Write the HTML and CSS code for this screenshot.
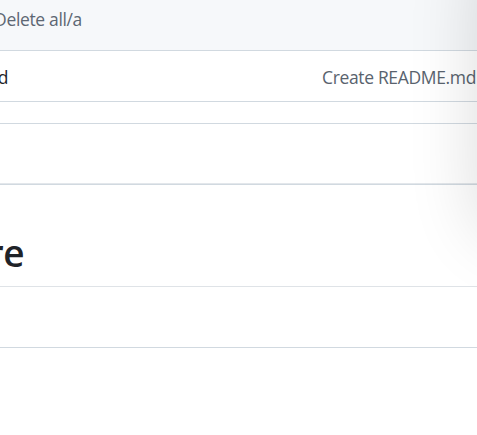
FILE: index.html
```html
<!DOCTYPE html>
<html lang="en">
<head>
<meta charset="utf-8">
<title>Repository</title>
<link rel="stylesheet" href="styles.css">
</head>
<body>
<div class="page">
  <div class="files">
    <div class="files-head">
      <div class="cut cut-head"><span class="muted">Delete all/a</span></div>
    </div>
    <div class="file-row">
      <div class="cut cut-name"><span class="name">d</span></div>
      <div class="commit">Create README.md</div>
    </div>
    <div class="file-gap"></div>
  </div>
  <div class="readme">
    <div class="readme-bar"></div>
    <div class="readme-body">
      <div class="h1">
        <div class="cut cut-h1"><span>re</span></div>
      </div>
      <div class="para"></div>
    </div>
  </div>
</div>
<div class="drawer-shadow"></div>
</body>
</html>
```
FILE: styles.css
```css
html, body {
  margin: 0;
  padding: 0;
  background: #ffffff;
  overflow: hidden;
}
body {
  font-family: "Open Sans", "Noto Sans", sans-serif;
  font-size: 17.5px;
  letter-spacing: -0.35px;
  color: #1f2328;
}
.page {
  width: 477px;
}
.cut {
  display: flex;
  justify-content: flex-end;
  white-space: nowrap;
  flex: none;
}
.files-head {
  height: 51px;
  box-sizing: border-box;
  background: #f6f8fa;
  border-bottom: 1px solid #d1d9e0;
  padding-top: 7px;
  line-height: 24px;
}
.muted {
  color: #5d6773;
}
.cut-head {
  width: 82px;
}
.file-row {
  height: 51px;
  box-sizing: border-box;
  border-bottom: 1px solid #d1d9e0;
  display: flex;
  justify-content: space-between;
  align-items: flex-start;
  padding-top: 14px;
  line-height: 24px;
}
.cut-name {
  width: 8px;
}
.commit {
  color: #59636e;
  margin-right: 1px;
}
.file-gap {
  height: 21px;
  border-bottom: 1px solid #d1d9e0;
}
.readme-bar {
  height: 59px;
  border-bottom: 1px solid #e3e7eb;
  box-shadow: 0 1px 0 #d1d9e0;
}
.h1 {
  height: 103px;
  box-sizing: border-box;
  border-bottom: 1px solid #dfe3e7;
  display: flex;
  align-items: flex-end;
  padding-bottom: 11px;
}
.cut-h1 {
  width: 24px;
  font-size: 37px;
  font-weight: 600;
  letter-spacing: -0.5px;
  line-height: 44px;
  color: #1f2328;
}
.para {
  height: 60px;
  border-bottom: 1px solid #d1d9e0;
}
.drawer-shadow {
  position: fixed;
  left: 477px;
  top: -60px;
  width: 300px;
  height: 300px;
  border-radius: 40px;
  background: #ffffff;
  box-shadow: 0 0 70px rgba(0, 0, 0, 0.14);
}
```
